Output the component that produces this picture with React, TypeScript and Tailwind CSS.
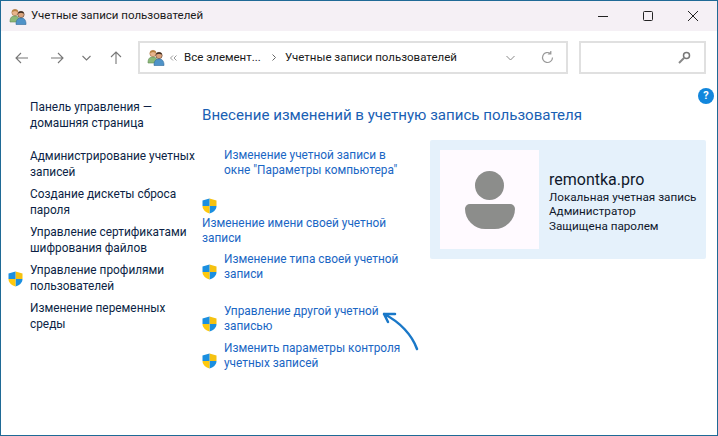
const font = "font-['Roboto','Open_Sans',sans-serif]";

const Shield = () => (
  <svg width="15" height="16" viewBox="0 0 15 16" className="shrink-0">
    <path d="M7.500 0.500 L14.500 2.500 V8 H7.500 Z" fill="#f5c211" />
    <path d="M7.500 0.500 V8 H0.500 V2.500 Z" fill="#1b8fe0" />
    <path d="M7.500 8 H14.500 C14.500 12 11 14.500 7.500 15.500 Z" fill="#1b8fe0" />
    <path d="M0.500 8 H7.500 V15.500 C4 14.500 0.500 12 0.500 8 Z" fill="#ffc90e" />
  </svg>
);

const Users = () => (
  <svg width="18" height="17" viewBox="0 0 18 17">
    <circle cx="6" cy="4.500" r="3.200" fill="#e8b48c" stroke="#a8764a" strokeWidth="0.6" />
    <path d="M3 4 C3 0.500 9 0.500 9 4 L6 3 Z" fill="#b5813f" />
    <path d="M1 14 C1 9 3 8 6 8 C9 8 10 9.500 10 14 Z" fill="#8cb878" stroke="#5f8a55" strokeWidth="0.6" />
    <circle cx="12" cy="6.500" r="3.200" fill="#d9a27c" stroke="#5a4030" strokeWidth="0.6" />
    <path d="M9 5.500 C9.500 2.500 14.500 2.500 15 5.500 L12 4.800 Z" fill="#3a2a20" />
    <path d="M7 16.500 C7 11.500 9 10 12 10 C15 10 17 11.500 17 16.500 Z" fill="#4f93c8" stroke="#2f6a9a" strokeWidth="0.6" />
  </svg>
);

const NavItem = ({ lines, shield }: { lines: string[]; shield?: boolean }) => (
  <div className="flex items-center">
    <div className="w-[29px] pl-[7px] shrink-0">{shield && <Shield />}</div>
    <div className="whitespace-nowrap leading-[15.5px] text-[#0c1f45]">
      {lines.map((l) => (
        <div key={l}>{l}</div>
      ))}
    </div>
  </div>
);

const TaskLink = ({ lines, shield }: { lines: string[]; shield?: boolean }) => (
  <div className="flex items-center">
    <div className="w-[22px] shrink-0 pt-[9px]">{shield && <Shield />}</div>
    <div className="whitespace-nowrap leading-[15px] text-[#1a66c4]">
      {lines.map((l) => (
        <div key={l}>{l}</div>
      ))}
    </div>
  </div>
);

export default function App() {
  return (
    <div className={`relative flex h-[436px] w-[718px] flex-col overflow-hidden border border-[#1f6a96] bg-white text-[11.85px] ${font}`}>
      <div className="flex h-[30px] shrink-0 items-center bg-[#f5f0f5] pl-[8px]">
        <Users />
        <span className="ml-[4px] text-[11.5px] text-[#1a1a1a]">Учетные записи пользователей</span>
        <div className="ml-auto flex items-center text-[#222]">
          <svg width="46" height="30" viewBox="0 0 46 30"><path d="M19 15.500 H29" stroke="#222" strokeWidth="1" /></svg>
          <svg width="46" height="30" viewBox="0 0 46 30"><rect x="18.500" y="10.500" width="9" height="9" rx="1" fill="none" stroke="#222" /></svg>
          <svg width="46" height="30" viewBox="0 0 46 30"><path d="M17 10 L27 20 M27 10 L17 20" stroke="#222" strokeWidth="1" /></svg>
        </div>
      </div>

      <div className="flex h-[54px] shrink-0 items-center pl-[14px] pr-[12px] pb-[1px]">
        <div className="flex w-[123px] shrink-0 items-center text-[#777]">
          <svg width="14" height="12" viewBox="0 0 14 12"><path d="M13 6 H1 M6 1 L1 6 L6 11" fill="none" stroke="#777" strokeWidth="1.100" /></svg>
          <svg className="ml-[21px]" width="14" height="12" viewBox="0 0 14 12"><path d="M1 6 H13 M8 1 L13 6 L8 11" fill="none" stroke="#777" strokeWidth="1.100" /></svg>
          <svg className="ml-[18px]" width="9" height="6" viewBox="0 0 9 6"><path d="M0.500 1 L4.500 5 L8.500 1" fill="none" stroke="#777" strokeWidth="1.100" /></svg>
          <svg className="ml-[19px]" width="12" height="14" viewBox="0 0 12 14"><path d="M6 13 V1 M1 6 L6 1 L11 6" fill="none" stroke="#777" strokeWidth="1.100" /></svg>
        </div>
        <div className="flex h-[33px] w-[430px] shrink-0 items-center border-2 border-[#e0e0e0] pl-[7px] pr-[12px]">
          <Users />
          <svg className="ml-[5px]" width="7" height="6" viewBox="0 0 7 6"><path d="M3 0.500 L0.500 3 L3 5.500 M6.500 0.500 L4 3 L6.500 5.500" fill="none" stroke="#999" /></svg>
          <span className="ml-[7px] text-[11.5px] text-[#1a1a1a]">Все элемент...</span>
          <svg className="ml-[11px]" width="4" height="7" viewBox="0 0 4 7"><path d="M0.500 0.500 L3.500 3.500 L0.500 6.500" fill="none" stroke="#666" /></svg>
          <span className="ml-[9px] text-[11.5px] text-[#1a1a1a]">Учетные записи пользователей</span>
          <svg className="ml-auto" width="9" height="6" viewBox="0 0 9 6"><path d="M0.500 1 L4.500 5 L8.500 1" fill="none" stroke="#888" /></svg>
          <svg className="ml-[26px]" width="13" height="13" viewBox="0 0 13 13"><path d="M11.500 6.500 A5 5 0 1 1 9.500 2.500 M9.800 0 V3 H6.800" fill="none" stroke="#999" strokeWidth="1.200" /></svg>
        </div>
        <div className="ml-[11px] flex h-[33px] w-[127px] shrink-0 items-center justify-end border-2 border-[#e0e0e0] pr-[13px]">
          <svg width="13" height="13" viewBox="0 0 13 13"><circle cx="8.500" cy="4.500" r="3" fill="none" stroke="#777" strokeWidth="1.500" /><path d="M6 7 L1 12" stroke="#888" strokeWidth="2" /></svg>
        </div>
      </div>

      <div className="flex min-h-0 flex-1">
        <div className="w-[201px] shrink-0 pt-[15px]">
          <div className="flex flex-col gap-[7px]">
            <div className="mb-[11px]"><NavItem lines={["Панель управления —", "домашняя страница"]} /></div>
            <NavItem lines={["Администрирование учетных", "записей"]} />
            <NavItem lines={["Создание дискеты сброса", "пароля"]} />
            <NavItem lines={["Управление сертификатами", "шифрования файлов"]} />
            <NavItem shield lines={["Управление профилями", "пользователей"]} />
            <NavItem lines={["Изменение переменных", "среды"]} />
          </div>
        </div>

        <div className="w-[228px] shrink-0 pt-[19px]">
          <h1 className="whitespace-nowrap text-[15.1px] leading-[22px] font-normal text-[#1a5fb4]">Внесение изменений в учетную запись пользователя</h1>
          <div className="mt-[22px] flex flex-col">
            <TaskLink lines={["Изменение учетной записи в", 'окне "Параметры компьютера"']} />
            <div className="mt-[20px]"><Shield /></div>
            <div className="mt-[2px] whitespace-nowrap leading-[15px] text-[#1a66c4]">
              <div>Изменение имени своей учетной</div>
              <div>записи</div>
            </div>
            <div className="mt-[6px]"><TaskLink shield lines={["Изменение типа своей учетной", "записи"]} /></div>
            <div className="mt-[22px]"><TaskLink shield lines={["Управление другой учетной", "записью"]} /></div>
            <div className="mt-[7px]"><TaskLink shield lines={["Изменить параметры контроля", "учетных записей"]} /></div>
          </div>
        </div>

        <div className="pt-[55px]">
          <div className="flex h-[119px] w-[276px] items-center rounded-[2px] bg-[#e5f1fb] pl-[10px]">
            <div className="flex h-[99px] w-[99px] shrink-0 flex-col items-center justify-center gap-[4px] bg-[#fffaff]">
              <div className="h-[29px] w-[29px] rounded-full bg-[#8c8d8b]" />
              <div className="h-[25px] w-[50px] rounded-t-[6px] rounded-b-[25px] bg-[#8c8d8b]" />
            </div>
            <div className="ml-[10px] pt-[4px] text-[#10182b]">
              <div className="text-[16px] leading-[20px]">remontka.pro</div>
              <div className="text-[11.7px] leading-[14.500px]">Локальная учетная запись</div>
              <div className="text-[11.7px] leading-[14.500px]">Администратор</div>
              <div className="text-[11.7px] leading-[14.500px]">Защищена паролем</div>
            </div>
          </div>
        </div>
      </div>

      <div className="absolute left-[697px] top-[87px] flex h-[16px] w-[16px] items-center justify-center rounded-full bg-[#1286dc] text-[11px] font-bold text-white">?</div>
      <svg className="absolute left-[375px] top-[305px]" width="50" height="50" viewBox="0 0 50 50">
        <path d="M41 43 C36 29 24 16 8 8 M19 8 L8 8 L12 16" fill="none" stroke="#1a78c8" strokeWidth="2.500" strokeLinecap="round" strokeLinejoin="round" />
      </svg>
    </div>
  );
}
